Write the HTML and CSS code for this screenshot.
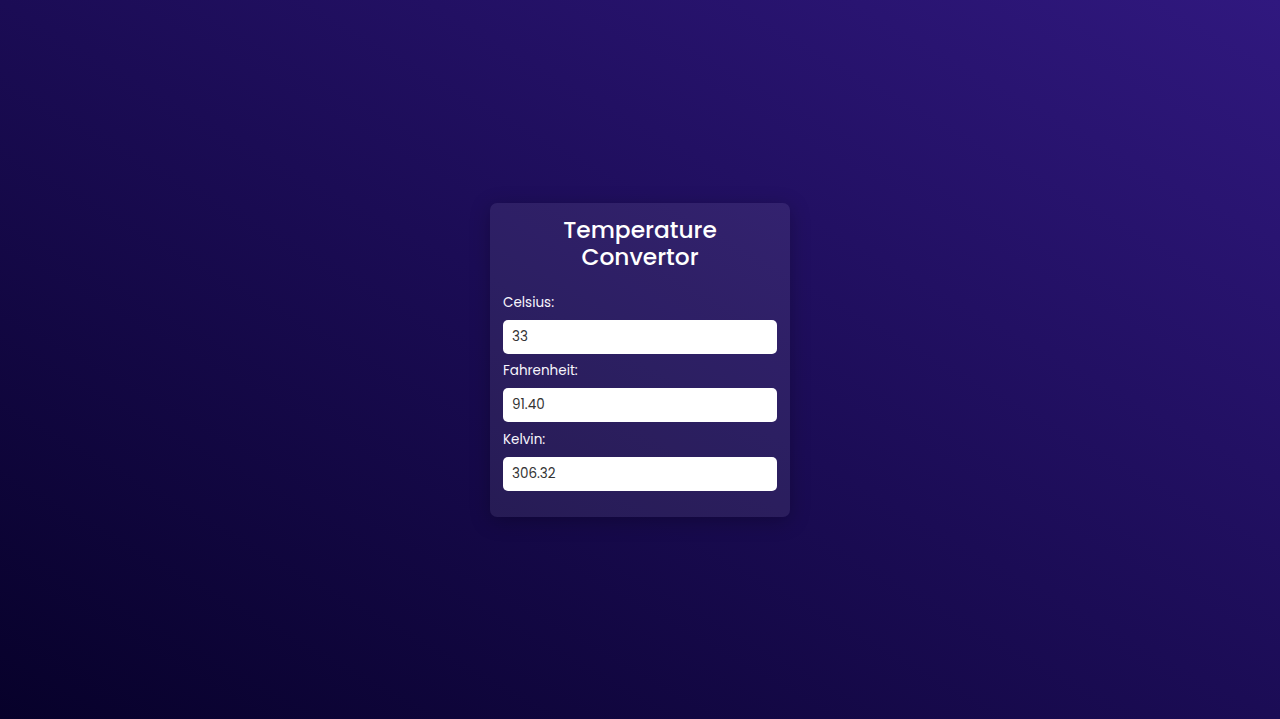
FILE: index.html
```html
<!DOCTYPE html>
<html lang="en">
<head>
<meta charset="utf-8">
<title>Temperature Convertor</title>
<link rel="stylesheet" href="styles.css">
</head>
<body>
<main class="page">
  <section class="card">
    <h1 class="title">Temperature Convertor</h1>
    <div class="field">
      <label class="label" for="c">Celsius:</label>
      <input class="input" id="c" type="text" value="33">
    </div>
    <div class="field">
      <label class="label" for="f">Fahrenheit:</label>
      <input class="input" id="f" type="text" value="91.40">
    </div>
    <div class="field">
      <label class="label" for="k">Kelvin:</label>
      <input class="input" id="k" type="text" value="306.32">
    </div>
  </section>
</main>
</body>
</html>
```
FILE: styles.css
```css
* { box-sizing: border-box; }
html, body { margin: 0; height: 100%; }
body {
  font-family: "Poppins", "Open Sans", "Noto Sans", sans-serif;
  background: linear-gradient(to top right, #07012a 0%, #1b0c55 50%, #30187f 100%);
  color: #fff;
}
.page {
  height: 719px;
  display: flex;
  align-items: center;
  justify-content: center;
}
.card {
  width: 300px;
  padding: 14px 13px 26px;
  background: rgba(255, 255, 255, 0.08);
  border-radius: 7px;
  box-shadow: 0 4px 20px rgba(0, 0, 0, 0.25);
  display: flex;
  flex-direction: column;
  gap: 6.5px;
}
.title {
  margin: 0 0 14.5px;
  text-align: center;
  font-size: 23.3px;
  line-height: 27px;
  font-weight: 500;
  padding: 0 50px;
  color: #fff;
}
.field {
  display: flex;
  flex-direction: column;
  gap: 7px;
}
.label {
  font-size: 13.5px;
  line-height: 21px;
  font-weight: 400;
  color: #f7f5fc;
}
.input {
  height: 34px;
  width: 100%;
  border: none;
  border-radius: 5px;
  padding: 0 9px;
  font-family: inherit;
  font-size: 13.5px;
  color: #333;
  background: #fff;
  outline: none;
}
```
